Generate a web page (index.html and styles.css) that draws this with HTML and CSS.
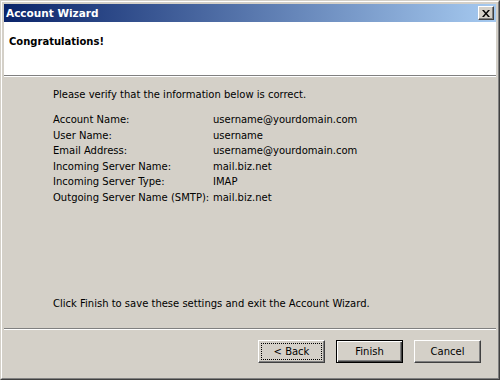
FILE: index.html
```html
<!DOCTYPE html>
<html>
<head>
<meta charset="utf-8">
<link rel="stylesheet" href="styles.css">
</head>
<body>
<div class="frame">
  <div class="frame-inner">
    <div class="titlebar">
      <span class="title">Account Wizard</span>
      <span class="close-btn">
        <svg width="8" height="7" viewBox="0 0 8 7"><path d="M0 0h2l2 2.5L6 0h2L5 3.5 8 7H6L4 4.5 2 7H0l3-3.5z" fill="#000"/></svg>
      </span>
    </div>
    <div class="header">
      <h1 class="heading">Congratulations!</h1>
    </div>
    <div class="body">
      <p class="intro">Please verify that the information below is correct.</p>
      <div class="info">
        <span>Account Name:</span><span>username@yourdomain.com</span>
        <span>User Name:</span><span>username</span>
        <span>Email Address:</span><span>username@yourdomain.com</span>
        <span>Incoming Server Name:</span><span>mail.biz.net</span>
        <span>Incoming Server Type:</span><span>IMAP</span>
        <span>Outgoing Server Name (SMTP):</span><span>mail.biz.net</span>
      </div>
      <p class="outro">Click Finish to save these settings and exit the Account Wizard.</p>
    </div>
    <div class="footer">
      <button class="btn btn-focus"><span>&lt; Back</span></button>
      <button class="btn btn-default"><span>Finish</span></button>
      <button class="btn"><span>Cancel</span></button>
    </div>
  </div>
</div>
</body>
</html>
```
FILE: styles.css
```css
* { box-sizing: border-box; }
html, body { margin: 0; padding: 0; }
body {
  width: 500px;
  height: 380px;
  background: #D4D0C8;
  font-family: "DejaVu Sans", Verdana, sans-serif;
  font-size: 10px;
  color: #000;
}
.frame {
  width: 500px;
  height: 380px;
  border-style: solid;
  border-width: 1px;
  border-color: #D4D0C8 #404040 #404040 #D4D0C8;
}
.frame-inner {
  height: 100%;
  border-style: solid;
  border-width: 1px;
  border-color: #FFFFFF #808080 #808080 #FFFFFF;
  padding: 2px;
  display: flex;
  flex-direction: column;
}
.titlebar {
  height: 18px;
  flex: none;
  background: linear-gradient(to right, #0A246A, #A6CAF0);
  display: flex;
  align-items: center;
  justify-content: space-between;
  padding: 0 2px 0 2px;
}
.title {
  color: #fff;
  font-weight: bold;
  font-size: 10.5px;
  line-height: 18px;
}
.close-btn {
  width: 16px;
  height: 14px;
  background: #D4D0C8;
  border-style: solid;
  border-width: 1px;
  border-color: #FFFFFF #404040 #404040 #FFFFFF;
  box-shadow: inset -1px -1px 0 #808080;
  display: flex;
  align-items: center;
  justify-content: center;
  padding-right: 1px;
}
.close-btn svg { display: block; }
.header {
  height: 54px;
  flex: none;
  background: #fff;
  border-bottom: 1px solid #808080;
  box-shadow: 0 1px 0 #fff;
  padding: 13px 0 0 5px;
}
.heading {
  margin: 0;
  font-size: 10px;
  font-weight: bold;
  line-height: 13px;
}
.body {
  flex: 1;
  display: flex;
  flex-direction: column;
  padding: 11px 0 17px 49px;
  margin-top: 1px;
  border-bottom: 1px solid #808080;
}
.intro {
  margin: 0 0 10px 0;
  line-height: 14px;
}
.info {
  display: grid;
  grid-template-columns: 160px auto;
  grid-auto-rows: 15.5px;
  line-height: 15.5px;
}
.outro {
  margin: auto 0 0 0;
  line-height: 14px;
}
.footer {
  flex: none;
  height: 47px;
  border-top: 1px solid #fff;
  display: flex;
  justify-content: flex-end;
  align-items: flex-start;
  gap: 11px;
  padding: 10px 15px 0 0;
}
.btn {
  width: 67px;
  height: 23px;
  padding: 0;
  margin: 0;
  background: #D4D0C8;
  font-family: "DejaVu Sans", Verdana, sans-serif;
  font-size: 10px;
  color: #000;
  border-style: solid;
  border-width: 1px;
  border-color: #FFFFFF #404040 #404040 #FFFFFF;
  box-shadow: inset -1px -1px 0 #808080;
  display: flex;
  align-items: center;
  justify-content: center;
}
.btn-focus span {
  display: flex;
  align-items: center;
  justify-content: center;
  width: 59px;
  height: 15px;
  outline: 1px dotted #000;
}
.btn-default {
  border: 1px solid #000;
  box-shadow: inset 1px 1px 0 #fff, inset -1px -1px 0 #404040, inset -2px -2px 0 #808080;
}
```
